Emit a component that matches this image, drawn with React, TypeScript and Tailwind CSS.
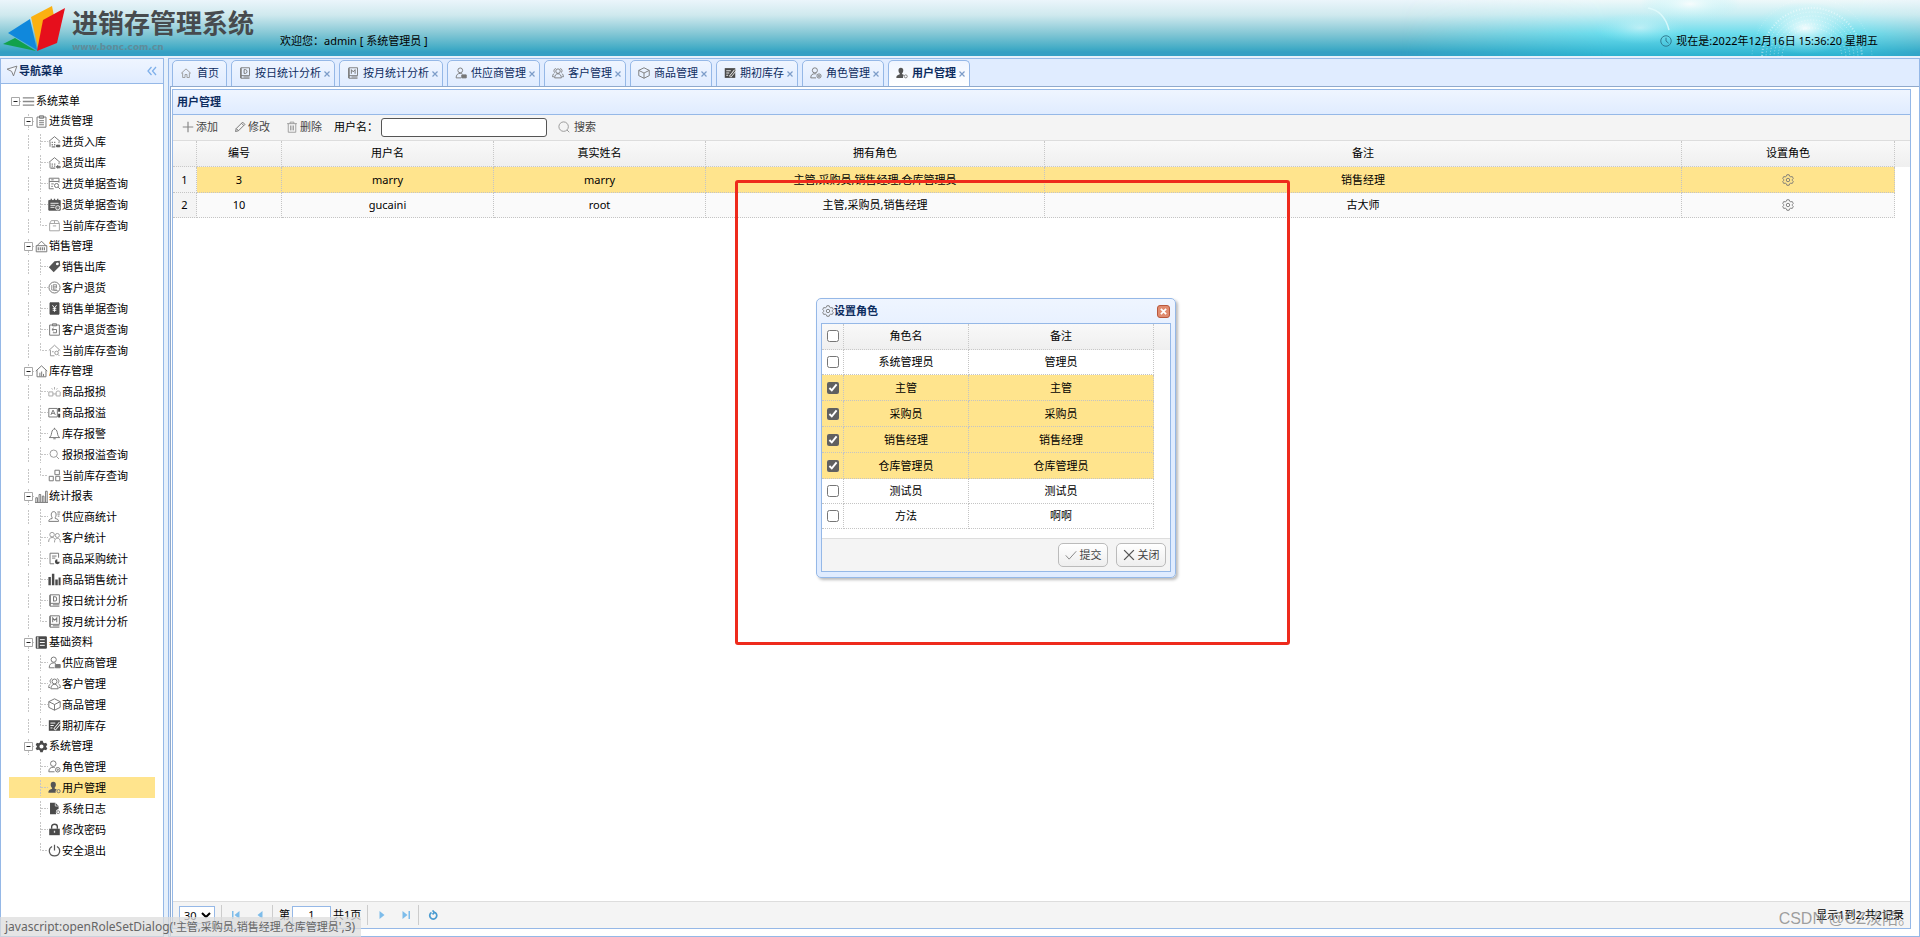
import type { ReactNode } from "react";

const icons: Record<string, ReactNode> = {
  nav: <path d="M1.5 5.5 14.5 1.5 10 14.5 7.5 8.5z" fill="#f4f8ff" />,
  menu: <path d="M1 3.5h14M1 8h14M1 12.5h14" strokeWidth="1.6" stroke="#888" />,
  clipboard: (
    <>
      <path d="M2.5 2.5h11v12.5h-11z" />
      <path d="M5.5 1h5v3h-5zM5 7h6M5 9.5h6M5 12h6" />
    </>
  ),
  houseIn: (
    <>
      <path d="M1 8 8 2l7 6M2.5 8v6.5M13.5 8v2" />
      <path d="M4.5 9h1.5M7.5 9h1.5M4.5 12h1.5M7.5 12h1.5M4.5 14.5h4.5" strokeWidth="1.6" />
      <path d="M10.5 12.5h4v2h-4z" fill="#555" stroke="#555" />
    </>
  ),
  houseOut: (
    <>
      <path d="M1 8 8 2l7 6M2.5 8v6.5M13.5 8v2" />
      <path d="M4.5 10h1.5M7.5 10h1.5M4.5 12.5h1.5M7.5 12.5h1.5M3 15h6" strokeWidth="1.6" />
      <path d="m10 13.5 2-2v1.2h3v1.8h-3V15z" fill="#555" />
    </>
  ),
  docSearch: (
    <>
      <path d="M7 14.5H1.5v-13h12V7M1.5 5.5h12M4 8.5h3M4 11.5h2M4 3.5h3" />
      <circle cx="10.5" cy="10.5" r="2.5" />
      <path d="m12.5 12.5 2.5 2.5" />
    </>
  ),
  calendar: (
    <>
      <path d="M1 3h14v12H1z" fill="#555" stroke="#555" />
      <path d="M4 1v3M8 1v3M12 1v3" stroke="#555" strokeWidth="1.6" />
      <path d="M3 6.5h10M3 9h6M3 11.5h5" stroke="#eee" />
      <circle cx="12" cy="12" r="2.6" fill="#777" stroke="#eee" />
    </>
  ),
  box: (
    <g stroke="#a5a5a5">
      <path d="M2 5.5h12v9H2zM2 5.5l2-3.5h8l2 3.5M8 2v3.5M6 8.5h4" />
    </g>
  ),
  saleSign: (
    <>
      <path d="M2.5 7 8 1.5 13.5 7M1.5 7h13v7.5h-13z" />
      <path d="M4 9v3.5M6.5 9v3.5M9 9v3.5M11.5 9v3.5" strokeWidth="1.4" />
    </>
  ),
  tag: (
    <path
      d="M8 1.5 14.5 1l.5 6L7 15 1 9zM11.500 3a1.800 1.800 0 1 0 .1 3.600 1.800 1.800 0 0 0-.1-3.600z"
      fill="#555"
      fillRule="evenodd"
      stroke="none"
    />
  ),
  refund: (
    <>
      <circle cx="8" cy="8" r="6.8" />
      <path d="M6.500 4.500h4v4h-4zM6.500 6.500h4M7 8.500v2.500l4 0M4.500 5v6l7.500 1" strokeWidth=".9" />
    </>
  ),
  yen: (
    <>
      <path d="M2.500 1h11v14h-11z" fill="#4a4a4a" stroke="#4a4a4a" />
      <path d="m5.500 4 2.500 3.500L10.500 4M8 7.500V12M5.800 8.200h4.400M5.800 10.200h4.400" stroke="#fff" />
    </>
  ),
  clipBack: (
    <>
      <path d="M2 2.500h12V15H2zM5.500 1h5v2.500h-5z" />
      <path d="M7 6 4.800 8 7 10M5 8h5.500v4H6" />
    </>
  ),
  homeSearch: (
    <g stroke="#999">
      <path d="M1 8 8 1.500 15 8M3 7.500v7h5M13 7.500V9" />
      <circle cx="10.500" cy="11" r="2.200" />
      <path d="m12 12.700 2 2M5 9.500h2" />
    </g>
  ),
  homeBars: <path d="M1 7.500 8 1l7 6.500M2.500 6.500v8h11v-8M6 14V9.500M8.200 14V8M10.500 14v-3" />,
  damage: (
    <g stroke="#aaa">
      <path d="M1 8.500h5v5H1zM10 8.500c1-1.500 4-1.500 5 0v5h-5zM6 11h4M8 2.500v3M4.500 4l1 1.500M11.500 4l-1 1.500" />
    </g>
  ),
  overflow: (
    <>
      <path d="M1 3h10.500v10.500H1zM3.500 11l2.700-6L9 11M4.500 9h3.500" />
      <path d="M12.500 2.500h2.500v4.500h-2.500zM12.500 9.500h2.500v4.500h-2.500z" fill="#444" stroke="none" />
    </>
  ),
  bell: <path d="M1.500 13c2-1 2.500-3 3-6C5 4 6.500 2.500 8 2.500S11 4 11.500 7c.5 3 1 5 3 6zM8 1v1.500M6.500 14.500h3" />,
  search: (
    <g stroke="#999">
      <circle cx="7" cy="7" r="4.500" />
      <path d="m10.500 10.500 3 3" />
    </g>
  ),
  blocks: <path d="M8.500 1.500h5.500V7H8.500zM1.500 9h5v5.500h-5zM9.500 9h5v5.500h-5z" />,
  bars: <path d="M1 15V9.500h2V15M5 15V5.500h2V15M9 15V7.500h2V15M13 15V1.500h2V15M0 15.300h16" />,
  supplierStat: (
    <>
      <path d="M1 14c0-2 1-3 4-3.500V9C3.500 7 3.500 2 7 2s3.500 5 2 7v1.500c3 .5 4 1.500 4 3.500z" />
      <path d="M11.500 2.500H15M11.500 5h3M12 7.500h2" />
    </>
  ),
  people: (
    <g stroke="#999">
      <circle cx="5" cy="4.500" r="2.800" />
      <circle cx="11.500" cy="5.500" r="2.500" />
      <path d="M.8 13.500c0-4 2-5.500 4.200-5.500s3 1 3.500 2M8 14c0-4 1.500-5 3.500-5s3.700 1 3.700 5" />
    </g>
  ),
  docPie: (
    <>
      <path d="M7.500 14.500h-5v-13h10.500V7M5 5h5.500M5 7.500h4" />
      <path d="M11.500 9a3 3 0 1 0 3 3h-3z" fill="#444" stroke="none" />
    </>
  ),
  solidBars: (
    <path d="M.5 5h3v10h-3zM4.800 1h3v14h-3zM9 8h3v7H9zM13 5.500h2.500V15H13z" fill="#4a4a4a" stroke="none" />
  ),
  bookD: (
    <>
      <path d="M2.500 1h11.500v10.500H2.500zM2.500 11.500v3.500H14" />
      <path d="M2.500 1.500v13" strokeWidth="1.800" />
      <path d="M6 13.300h8" />
      <path d="M6.800 3.500h2c2.500 0 2.500 5 0 5h-2z" strokeWidth="1.300" />
    </>
  ),
  bookM: (
    <>
      <path d="M2.500 1h11.500v10.500H2.500zM2.500 11.500v3.500H14" />
      <path d="M2.500 1.500v13" strokeWidth="1.800" />
      <path d="M6 13.300h8" />
      <path d="M5.800 9V3.500l2.500 3 2.500-3V9" strokeWidth="1.300" />
    </>
  ),
  ledger: (
    <>
      <path d="M1.500 1H14v14H1.500z" fill="#4a4a4a" stroke="#4a4a4a" />
      <path d="M6 4.500h6M6 8h6M6 11.500h6M3.500 1v14" stroke="#fff" />
    </>
  ),
  supplier: (
    <>
      <circle cx="7" cy="4.500" r="3.200" />
      <path d="M8 14.500H1.500c0-4 2-6 5.500-6 1 0 2 .2 2.800.7" />
      <path d="M9 10.500h6v4H9z" fill="#777" stroke="#777" />
    </>
  ),
  group: (
    <>
      <circle cx="8" cy="5.500" r="3" />
      <path d="M3.500 14.500c0-3.500 2-5.500 4.500-5.500s4.500 2 4.500 5.500zM4 7.500C2 7 2 2.500 5 2M12 7.500c2-.5 2-5-1-5.500M2.500 13H.8c0-2 .7-3.500 2.200-4.500M13.500 13h1.700c0-2-.7-3.500-2.200-4.500" />
    </>
  ),
  cube: <path d="M8 1 15 4.500v7L8 15 1 11.500v-7zM1 4.500 8 8l7-3.500M8 8v7" />,
  edit: (
    <>
      <path d="M1 1.500h14v13H1z" fill="#4a4a4a" stroke="none" />
      <path d="M3 5h6M3 8h4M3 11h2.500" stroke="#fff" />
      <path d="m8 13 7-8.500" stroke="#fff" strokeWidth="3.500" />
      <path d="m8.500 12.500 6.500-8" stroke="#4a4a4a" strokeWidth="1.600" />
    </>
  ),
  gearSolid: (
    <path
      d="M6.500 1h3l.5 2 1.700 1 2-.6L15.200 6l-1.500 1.500v1l1.500 1.500-1.500 2.600-2-.6L10 13l-.5 2h-3L6 13l-1.700-1-2 .6L.8 10l1.500-1.500v-1L.8 6l1.500-2.600 2 .6L6 3zM8 5.500a2.500 2.500 0 1 0 0 5 2.500 2.500 0 0 0 0-5z"
      fill="#4a4a4a"
      fillRule="evenodd"
      stroke="none"
    />
  ),
  role: (
    <>
      <circle cx="6.500" cy="4.500" r="3.400" />
      <path d="M8 14.500H1c0-4 2-5.500 5.500-5.500 1 0 1.500.1 2 .3" />
      <circle cx="12" cy="12" r="2.800" />
      <circle cx="12" cy="12" r=".8" />
    </>
  ),
  userSolid: (
    <>
      <path
        d="M6.500 1c2.200 0 3.200 1.500 3.200 3.500S8.500 8 8 8.500c0 1 2 1.500 3 2-1.500.5-2 2-1.500 4H.5c0-2.500.5-3.500 4.500-5V8.500C4 7.500 3.300 6 3.300 4.500 3.300 2.500 4.300 1 6.500 1z"
        fill="#555"
        stroke="none"
      />
      <circle cx="13" cy="12.500" r="2" />
    </>
  ),
  log: (
    <>
      <path d="M2.500 1H9l4 4v3.500c-3 .5-4 3-3 6.500H2.500z" fill="#4a4a4a" stroke="none" />
      <path d="M9 1v4h4" stroke="#fff" strokeWidth=".8" />
      <circle cx="12.500" cy="12.500" r="1.800" stroke="#888" />
    </>
  ),
  lock: (
    <>
      <path d="M1.500 7h13v8h-13z" fill="#4a4a4a" stroke="none" />
      <path d="M4.500 7V4.500c0-4 7-4 7 0V7" stroke="#4a4a4a" strokeWidth="1.700" />
      <path d="M8 9.500V12" stroke="#ddd" strokeWidth="1.600" />
    </>
  ),
  power: <path d="M5 3C-.5 6 1 14.500 8 14.500S16.500 6 11 3M8 1v7" stroke="#555" strokeWidth="1.500" />,
  home: <path d="M1.500 8.500 8 2.500l6.500 6M3.500 7.500v6.500h3.200V10h2.600v4h3.200V7.500" stroke="#999" />,
  plus: <path d="M8 1v14M1 8h14" stroke="#888" strokeWidth="1.600" />,
  pencil: <path d="m2 14 1-4 8.500-8.500 3 3L6 13zM3 10l3 3M10 3l3 3" strokeWidth="1.300" />,
  trash: (
    <g stroke="#999">
      <path d="M1.500 3.500h13M5.500 3.500v-2h5v2M3 3.500V15h10V3.500M6 6v6.500M8 6v6.500M10 6v6.500" />
    </g>
  ),
  find: (
    <g stroke="#999" strokeWidth="1.300">
      <circle cx="7.500" cy="7.500" r="6.300" />
      <path d="m12 12 3 3" />
    </g>
  ),
  gear: (
    <>
      <path d="M6.500 1h3l.7 2 1.500.8 2-.4L15 6l-1.300 1.500v1L15 10l-1.300 2.600-2-.4-1.500.8-.7 2h-3l-.7-2-1.500-.8-2 .4L1 10l1.300-1.500v-1L1 6l1.300-2.600 2 .4L5.800 3z" />
      <circle cx="8" cy="8" r="2.300" />
    </>
  ),
  tick: <path d="m1 8.500 4.500 5L15 3" stroke="#888" strokeWidth="1.300" />,
  cross: <path d="m1.500 1.500 13 13M14.500 1.500l-13 13" stroke="#555" strokeWidth="1.800" />,
  clock: (
    <g stroke="#2b7388" strokeWidth="1.200">
      <circle cx="8" cy="8" r="7" />
      <path d="M8 3.500V8l3.500 3" />
    </g>
  ),
};

function Icon({ name, className = "size-3" }: { name: string; className?: string }) {
  return (
    <svg
      viewBox="0 0 16 16"
      className={`shrink-0 ${className}`}
      fill="none"
      stroke="#777"
      strokeWidth="1.2"
      aria-hidden="true"
    >
      {icons[name]}
    </svg>
  );
}

type Leaf = [label: string, icon: string];

const groups: { label: string; icon: string; items: Leaf[] }[] = [
  {
    label: "进货管理",
    icon: "clipboard",
    items: [
      ["进货入库", "houseIn"],
      ["退货出库", "houseOut"],
      ["进货单据查询", "docSearch"],
      ["退货单据查询", "calendar"],
      ["当前库存查询", "box"],
    ],
  },
  {
    label: "销售管理",
    icon: "saleSign",
    items: [
      ["销售出库", "tag"],
      ["客户退货", "refund"],
      ["销售单据查询", "yen"],
      ["客户退货查询", "clipBack"],
      ["当前库存查询", "homeSearch"],
    ],
  },
  {
    label: "库存管理",
    icon: "homeBars",
    items: [
      ["商品报损", "damage"],
      ["商品报溢", "overflow"],
      ["库存报警", "bell"],
      ["报损报溢查询", "search"],
      ["当前库存查询", "blocks"],
    ],
  },
  {
    label: "统计报表",
    icon: "bars",
    items: [
      ["供应商统计", "supplierStat"],
      ["客户统计", "people"],
      ["商品采购统计", "docPie"],
      ["商品销售统计", "solidBars"],
      ["按日统计分析", "bookD"],
      ["按月统计分析", "bookM"],
    ],
  },
  {
    label: "基础资料",
    icon: "ledger",
    items: [
      ["供应商管理", "supplier"],
      ["客户管理", "group"],
      ["商品管理", "cube"],
      ["期初库存", "edit"],
    ],
  },
  {
    label: "系统管理",
    icon: "gearSolid",
    items: [
      ["角色管理", "role"],
      ["用户管理", "userSolid"],
      ["系统日志", "log"],
      ["修改密码", "lock"],
      ["安全退出", "power"],
    ],
  },
];

const tabs: Leaf[] = [
  ["按日统计分析", "bookD"],
  ["按月统计分析", "bookM"],
  ["供应商管理", "supplier"],
  ["客户管理", "group"],
  ["商品管理", "cube"],
  ["期初库存", "edit"],
  ["角色管理", "role"],
  ["用户管理", "userSolid"],
];

const users = [
  { id: 3, name: "marry", real: "marry", roles: "主管,采购员,销售经理,仓库管理员", note: "销售经理", selected: true },
  { id: 10, name: "gucaini", real: "root", roles: "主管,采购员,销售经理", note: "古大师", selected: false },
];

const roles = [
  { name: "系统管理员", note: "管理员", checked: false },
  { name: "主管", note: "主管", checked: true },
  { name: "采购员", note: "采购员", checked: true },
  { name: "销售经理", note: "销售经理", checked: true },
  { name: "仓库管理员", note: "仓库管理员", checked: true },
  { name: "测试员", note: "测试员", checked: false },
  { name: "方法", note: "啊啊", checked: false },
];

type Joint = "blank" | "line" | "tee" | "end" | "hit" | "hitRoot";

function TreeSlot({ kind }: { kind: Joint }) {
  const hit = kind === "hit" || kind === "hitRoot";
  return (
    <svg viewBox="0 0 13 21" className="h-[21px] w-[13px] shrink-0" fill="none" aria-hidden="true">
      <g stroke="#c6c6c6" strokeDasharray="2 1">
        {kind === "line" && <path d="M6.500 4v14" />}
        {kind === "tee" && <path d="M5.500 3v16M6 10.500h7" />}
        {kind === "end" && <path d="M5.500 3v7.500h7.500" />}
        {kind === "hit" && <path d="M6.500 3v3M6.500 15v4" />}
        {hit && <path d="M10 10.500h3" />}
      </g>
      {hit && (
        <>
          <path d="M2.500 6.500h8v8h-8z" fill="#fff" stroke="#a8a8a8" />
          <path d="M4.500 10.500h4" stroke="#222" />
        </>
      )}
    </svg>
  );
}

function TreeRow({
  slots,
  icon,
  label,
  leaf = false,
  selected = false,
}: {
  slots: Joint[];
  icon: string;
  label: string;
  leaf?: boolean;
  selected?: boolean;
}) {
  return (
    <a
      href="#"
      className={`flex items-center whitespace-nowrap ${leaf ? "h-[21px]" : "h-5"} ${selected ? "bg-[#ffe48d]" : ""}`}
    >
      {slots.map((s, i) => (
        <TreeSlot key={i} kind={s} />
      ))}
      <Icon name={icon} className="size-[13px]" />
      <span className="pl-px">{label}</span>
    </a>
  );
}

function Sidebar() {
  return (
    <aside className="flex w-[164px] shrink-0 flex-col border border-[#95b8e7] bg-white">
      <div className="flex h-[25px] shrink-0 items-center border-b border-[#95b8e7] bg-linear-to-b from-[#eff5ff] to-[#e0ecff] pr-1.5 pl-[5px]">
        <Icon name="nav" />
        <span className="flex-1 pl-px font-bold text-[#0e2d5f]">导航菜单</span>
        <button type="button" aria-label="折叠" className="text-[#7fb0ea]">
          <svg viewBox="0 0 10 10" className="size-[10px]" fill="none" stroke="currentColor" strokeWidth="1.300">
            <path d="M4.500 1 1 5l3.500 4M9 1 5.500 5 9 9" />
          </svg>
        </button>
      </div>
      <nav className="flex-1 px-2 pt-[7px]">
        <TreeRow slots={["hitRoot"]} icon="menu" label="系统菜单" />
        {groups.map((g, gi) => {
          const last = gi === groups.length - 1;
          return (
            <div key={g.label}>
              <TreeRow slots={["blank", "hit"]} icon={g.icon} label={g.label} />
              {g.items.map(([label, icon], i) => (
                <TreeRow
                  key={label}
                  slots={["blank", last ? "blank" : "line", i === g.items.length - 1 ? "end" : "tee"]}
                  icon={icon}
                  label={label}
                  leaf
                  selected={label === "用户管理"}
                />
              ))}
            </div>
          );
        })}
      </nav>
    </aside>
  );
}

function Banner() {
  return (
    <header className="relative flex h-14 shrink-0 items-end overflow-hidden bg-[linear-gradient(#ebf5fb_0%,#cfe9ee_27%,#84c7d5_60%,#43acc6_86%,#349fc4_93%,#349fc4_100%)]">
      <svg viewBox="0 0 520 56" className="absolute top-0 right-0 h-14 w-[520px]" fill="none" aria-hidden="true">
        <defs>
          <linearGradient id="sky" x1="0" y1="0" x2="0" y2="1">
            <stop offset="0" stopColor="#eef8fa" />
            <stop offset=".25" stopColor="#c8eef3" />
            <stop offset=".6" stopColor="#6bdcec" />
            <stop offset="1" stopColor="#2bb2d0" />
          </linearGradient>
          <linearGradient id="skyFade" x1="0" y1="0" x2="1" y2="0">
            <stop offset="0" stopColor="#fff" stopOpacity="0" />
            <stop offset=".4" stopColor="#fff" />
            <stop offset=".88" stopColor="#fff" />
            <stop offset="1" stopColor="#fff" stopOpacity=".3" />
          </linearGradient>
          <mask id="skyMask">
            <path d="M0 0h520v56H0z" fill="url(#skyFade)" />
          </mask>
          <radialGradient id="glow">
            <stop offset="0" stopColor="#fff" stopOpacity=".9" />
            <stop offset="1" stopColor="#9ff2f8" stopOpacity="0" />
          </radialGradient>
        </defs>
        <path d="M0 0h520v56H0z" fill="url(#sky)" mask="url(#skyMask)" />
        <ellipse cx="240" cy="28" rx="45" ry="16" fill="url(#glow)" opacity=".5" />
        <ellipse cx="290" cy="4" rx="50" ry="18" fill="url(#glow)" opacity=".8" />
        <ellipse cx="405" cy="28" rx="50" ry="26" fill="url(#glow)" />
        <path d="M248 8c12 2 18 10 21 22" stroke="#e4fbfd" strokeWidth="1.500" opacity=".8" />
        <g stroke="#fff" strokeDasharray="1 2" opacity=".5">
          <circle cx="412" cy="58" r="50" strokeWidth="2" />
          <circle cx="412" cy="58" r="46" />
          <circle cx="412" cy="58" r="42" />
          <circle cx="412" cy="58" r="38" />
          <circle cx="412" cy="58" r="34" />
          <circle cx="412" cy="58" r="30" />
          <circle cx="412" cy="58" r="60" opacity=".5" />
        </g>
      </svg>
      <div className="flex w-[280px] shrink-0 self-stretch">
        <svg viewBox="0 0 72 56" className="h-14 w-[72px] shrink-0" aria-hidden="true">
          <path d="M3 44 15 38 36 51z" fill="#12a14b" />
          <path d="M8 33 30 19 37 50z" fill="#1088dc" />
          <path d="M31 17 52 6 54 16 44 22 38 48z" fill="#fbb111" />
          <path d="M65 8 43 20 37 51 57 43z" fill="#e60f1c" />
        </svg>
        <div className="pt-[7px] text-[#474b4e]">
          <h1 className="text-[26px] leading-8 font-bold whitespace-nowrap">进销存管理系统</h1>
          <p className="font-['DejaVu_Sans',sans-serif] text-[9px] leading-4 font-bold text-[#5f8c9a]">
            www.bonc.com.cn
          </p>
        </div>
      </div>
      <p className="flex-1 pb-[5px] leading-5">欢迎您：admin [ 系统管理员 ]</p>
      <p className="relative flex items-center gap-1 pr-[42px] pb-[5px] leading-5">
        <Icon name="clock" />
        现在是:2022年12月16日 15:36:20 星期五
      </p>
    </header>
  );
}

function TabBar() {
  return (
    <div className="-mb-px flex h-7 shrink-0 items-end gap-1 pl-[3px] text-[#0e2d5f]">
      <button
        type="button"
        className="flex h-[27px] items-center gap-[3px] rounded-t-[5px] border border-[#95b8e7] bg-linear-to-b from-[#eff5ff] to-[#e0ecff] pr-[7px] pb-0.5 pl-[5px]"
      >
        <span className="flex w-4 justify-center">
          <Icon name="home" />
        </span>
        首页
      </button>
      {tabs.map(([label, icon]) => {
        const active = label === "用户管理";
        return (
          <div
            key={label}
            className={`flex h-[27px] items-center rounded-t-[5px] border border-[#95b8e7] bg-linear-to-b from-[#eff5ff] pr-1 pb-0.5 pl-[5px] ${
              active ? "border-b-white to-white font-bold" : "to-[#e0ecff]"
            }`}
          >
            <button type="button" className="flex items-center gap-[2px] whitespace-nowrap">
              <span className="flex w-4 justify-center">
                <Icon name={icon} />
              </span>
              {label}
            </button>
            <button type="button" aria-label={`关闭 ${label}`} className="ml-[3px] pt-0.5">
              <svg viewBox="0 0 6 6" className="size-[6px]" stroke="#7c9cc8" strokeWidth="1.200">
                <path d="m.5.5 5 5M5.500.5l-5 5" />
              </svg>
            </button>
          </div>
        );
      })}
    </div>
  );
}

function ToolButton({ icon, children }: { icon: string; children: ReactNode }) {
  return (
    <button type="button" className="flex items-center text-[#444]">
      <span className="flex w-[17px] justify-center">
        <Icon name={icon} />
      </span>
      {children}
    </button>
  );
}

const headCell = "h-[26px] border-r border-b border-dotted border-[#c8c8c8] p-0 pb-0.5 font-normal";
const cell = "border-r border-b border-dotted border-[#c4c4c4] p-0";

function UserGrid() {
  return (
    <div className="flex-1 bg-white">
      <div className="border-t border-[#ddd] bg-[linear-gradient(#f9f9f9,#efefef)] bg-size-[100%_26px] bg-no-repeat pr-[15px]">
        <table className="w-full table-fixed border-separate border-spacing-0 text-center">
          <colgroup>
            <col className="w-[24px]" />
            <col className="w-[85px]" />
            <col className="w-[212px]" />
            <col className="w-[212px]" />
            <col className="w-[339px]" />
            <col className="w-[637px]" />
            <col className="w-[213px]" />
          </colgroup>
          <thead>
            <tr>
              <th className={headCell} aria-label="行号" />
              {["编号", "用户名", "真实姓名", "拥有角色", "备注", "设置角色"].map((h) => (
                <th key={h} className={headCell}>
                  {h}
                </th>
              ))}
            </tr>
          </thead>
          <tbody>
            {users.map((u, i) => (
              <tr key={u.id} className={u.selected ? "h-[26px] bg-[#ffe48d]" : "h-[25px] bg-[#fafafa]"}>
                <td className={`${cell} bg-[#f4f4f4]`}>{i + 1}</td>
                <td className={cell}>{u.id}</td>
                <td className={cell}>{u.name}</td>
                <td className={cell}>{u.real}</td>
                <td className={cell}>{u.roles}</td>
                <td className={cell}>{u.note}</td>
                <td className={cell}>
                  <a href="#" aria-label="设置角色" className="flex justify-center">
                    <Icon name="gear" />
                  </a>
                </td>
              </tr>
            ))}
          </tbody>
        </table>
      </div>
    </div>
  );
}

function PageArrow({ d, label }: { d: string; label: string }) {
  return (
    <button type="button" aria-label={label} className="flex w-6 justify-center">
      <svg viewBox="0 0 10 10" className="size-[10px]" fill="#7dbcea">
        <path d={d} />
      </svg>
    </button>
  );
}

function Separator({ className = "" }: { className?: string }) {
  return <span className={`h-5 w-px shrink-0 bg-[#ccc] ${className}`} />;
}

function Pager() {
  return (
    <div className="flex h-[27px] shrink-0 items-center border-t border-[#ddd] bg-[#f4f4f4] pr-1.5 pl-1.5">
      <select aria-label="每页记录数" defaultValue="30" className="h-[18px] w-9 border border-[#95b8e7] bg-white">
        <option>30</option>
        <option>50</option>
      </select>
      <Separator className="mr-0.5 ml-1.5" />
      <PageArrow label="首页" d="M1 1h1.500v8H1zM8.500 1v8l-5-4z" />
      <PageArrow label="上一页" d="M7.500 1v8l-5-4z" />
      <Separator className="mr-1.5" />
      <label htmlFor="page">第</label>
      <input
        id="page"
        defaultValue="1"
        className="mx-0.5 h-[18px] w-[39px] border border-[#95b8e7] bg-white text-center"
      />
      <span>共1页</span>
      <Separator className="mr-0.5 ml-1.5" />
      <PageArrow label="下一页" d="M2.500 1v8l5-4z" />
      <PageArrow label="末页" d="M7.500 1H9v8H7.500zM1.500 1v8l5-4z" />
      <Separator className="mr-0.5" />
      <button type="button" aria-label="刷新" className="flex w-6 justify-center">
        <svg viewBox="0 0 10 10" className="size-[10px]" fill="none" stroke="#4a9bd0" strokeWidth="1.700">
          <path d="M7 2.500a3.500 3.500 0 1 1-3.500 0M4.500.5l2 2-2 1.800" />
        </svg>
      </button>
      <span className="ml-auto">显示1到2,共2记录</span>
    </div>
  );
}

function Workspace() {
  return (
    <main className="flex min-w-0 flex-1 flex-col border border-[#95b8e7] bg-[#e0ecff]">
      <TabBar />
      <div className="ml-px flex flex-1 flex-col border-t border-l border-[#8fa9cc] bg-white pt-[2px] pr-[8px] pb-[7px] pl-px">
        <section className="flex flex-1 flex-col border border-[#95b8e7]">
          <h2 className="flex h-[25px] shrink-0 items-center border-b border-[#95b8e7] bg-linear-to-b from-[#eff5ff] to-[#e0ecff] pl-1 font-bold text-[#0e2d5f]">
            用户管理
          </h2>
          <div className="flex h-[25px] shrink-0 items-center bg-[#f4f4f4] pb-px pl-1.5">
            <div className="flex items-center gap-[13px]">
              <ToolButton icon="plus">添加</ToolButton>
              <ToolButton icon="pencil">修改</ToolButton>
              <ToolButton icon="trash">删除</ToolButton>
            </div>
            <label htmlFor="userName" className="pr-[3px] pl-3">
              用户名：
            </label>
            <input id="userName" className="mr-2 h-[19px] w-[166px] rounded-[3px] border border-[#555] bg-white px-1" />
            <ToolButton icon="find">
              <span className="pl-0.5">搜索</span>
            </ToolButton>
          </div>
          <UserGrid />
          <Pager />
        </section>
      </div>
    </main>
  );
}

function RoleDialog() {
  return (
    <div
      role="dialog"
      aria-labelledby="roleTitle"
      className="absolute top-[298px] left-[816px] w-[360px] rounded-[5px] border border-[#95b8e7] bg-linear-to-b from-[#eff5ff] from-0% to-[#e0ecff] to-20% px-1 pb-[5px] shadow-[2px_2px_3px_#bbb]"
    >
      <div className="flex h-6 items-center px-px">
        <Icon name="gear" />
        <h2 id="roleTitle" className="flex-1 font-bold text-[#0e2d5f]">
          设置角色
        </h2>
        <button
          type="button"
          aria-label="关闭窗口"
          className="flex size-[13px] items-center justify-center rounded-[3px] border border-[#b9583c] bg-[#e08b6f]"
        >
          <svg viewBox="0 0 8 8" className="size-[7px]" stroke="#fff" strokeWidth="2">
            <path d="m1 1 6 6M7 1 1 7" />
          </svg>
        </button>
      </div>
      <div className="border border-[#95b8e7] bg-white">
        <div className="bg-[linear-gradient(#f9f9f9,#efefef)] bg-size-[100%_26px] bg-no-repeat pr-4 pb-[9px]">
          <table className="w-full table-fixed border-separate border-spacing-0 text-center">
            <colgroup>
              <col className="w-[22px]" />
              <col className="w-[125px]" />
              <col />
            </colgroup>
            <thead>
              <tr>
                <th className={headCell}>
                  <input type="checkbox" aria-label="全选" className="mx-auto block size-3" />
                </th>
                <th className={headCell}>角色名</th>
                <th className={headCell}>备注</th>
              </tr>
            </thead>
            <tbody>
              {roles.map((r) => (
                <tr key={r.name} className={r.checked ? "h-[26px] bg-[#ffe48d]" : "h-[25px] bg-white"}>
                  <td className={cell}>
                    <input
                      type="checkbox"
                      aria-label={r.name}
                      defaultChecked={r.checked}
                      className="mx-auto block size-3 accent-[#606060]"
                    />
                  </td>
                  <td className={cell}>{r.name}</td>
                  <td className={cell}>{r.note}</td>
                </tr>
              ))}
            </tbody>
          </table>
        </div>
        <div className="flex h-[33px] items-center justify-end gap-2 border-t border-[#ddd] bg-[#f4f4f4] pr-1">
          {[
            ["提交", "tick"],
            ["关闭", "cross"],
          ].map(([label, icon]) => (
            <button
              key={label}
              type="button"
              className="flex h-6 w-[50px] items-center justify-center gap-[3px] rounded-[5px] border border-[#bbb] bg-linear-to-b from-white to-[#eee] text-[#444]"
            >
              <Icon name={icon} />
              {label}
            </button>
          ))}
        </div>
      </div>
    </div>
  );
}

export default function App() {
  return (
    <div className="relative flex h-screen flex-col overflow-hidden bg-[#e6f0fb] font-['Noto_Sans','Noto_Sans_CJK_SC',sans-serif] text-[11px] leading-5 text-black">
      <Banner />
      <div className="flex min-h-0 flex-1 gap-1 pt-0.5">
        <Sidebar />
        <Workspace />
      </div>
      <RoleDialog />
      <div className="pointer-events-none absolute top-[180px] left-[735px] h-[465px] w-[555px] rounded-[3px] border-3 border-[#ee2a1c]" />
      <div className="absolute bottom-0 left-0 h-5 bg-[#dcdcdc]/75 pr-1.5 pl-[5px] text-xs leading-5 whitespace-nowrap text-[#666]">
        javascript:openRoleSetDialog('<span className="text-[11px]">主管,采购员,销售经理,仓库管理员</span>',3)
      </div>
      <div className="pointer-events-none absolute right-1.5 bottom-1.5 font-['Liberation_Sans','Noto_Sans_CJK_SC',sans-serif] text-base leading-6 text-[#777]/70">
        CSDN @CZ淡陌。
      </div>
    </div>
  );
}
